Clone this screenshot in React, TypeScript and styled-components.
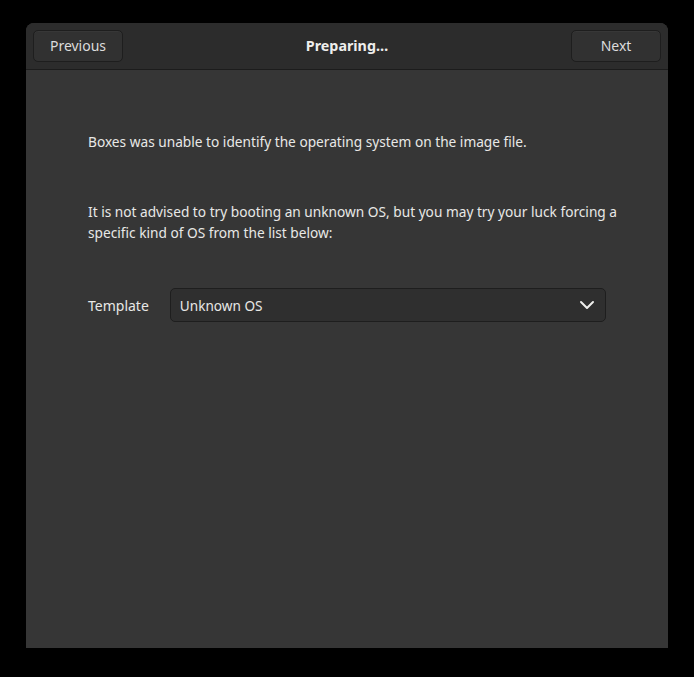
import React from "react";
import styled, { createGlobalStyle } from "styled-components";

const Global = createGlobalStyle`
  html, body { margin: 0; padding: 0; background: #000; }
  body { font-family: "Noto Sans", "DejaVu Sans", sans-serif; }
`;

const Page = styled.div`
  width: 694px;
  height: 677px;
  padding: 23px 26px 29px 26px;
  box-sizing: border-box;
  background: #000;
`;

const Window = styled.div`
  width: 642px;
  height: 625px;
  display: flex;
  flex-direction: column;
  border-radius: 8px 8px 0 0;
  overflow: hidden;
  background: #363636;
`;

const HeaderBar = styled.div`
  height: 47px;
  flex: 0 0 auto;
  display: flex;
  align-items: center;
  justify-content: space-between;
  padding: 0 7px 1px 7px;
  box-sizing: border-box;
  background: #2c2c2c;
  border-bottom: 1px solid #1c1c1c;
`;

const Button = styled.button`
  width: 90px;
  height: 32px;
  border-radius: 5px;
  border: 1px solid #1e1e1e;
  background: #313131;
  color: #dcdcdc;
  font-family: "Noto Sans", sans-serif;
  font-size: 14px;
  padding: 0 0 1px 0;
  box-shadow: inset 0 1px rgba(255,255,255,0.03);
`;

const Title = styled.div`
  color: #eeeeec;
  font-weight: 700;
  font-size: 14.3px;
  padding-bottom: 1px;
`;

const Body = styled.div`
  flex: 1;
  padding: 61px 62px 0 62px;
  display: flex;
  flex-direction: column;
  color: #e8e8e6;
  font-size: 13.7px;
  line-height: 21px;
`;

const Para = styled.p<{ $gap: number }>`
  margin: 0 -16px ${(p) => p.$gap}px 0;
`;

const Row = styled.div`
  display: flex;
  align-items: center;
  gap: 21px;
`;

const Label = styled.span`
  color: #e8e8e6;
  font-size: 14px;
`;

const Select = styled.div`
  flex: 1;
  height: 34px;
  box-sizing: border-box;
  border: 1px solid #1e1e1e;
  border-radius: 5px;
  background: #2f2f2f;
  display: flex;
  align-items: center;
  justify-content: space-between;
  padding: 0 10px 0 9px;
  color: #e8e8e6;
  font-size: 13.6px;
`;

export default function App() {
  return (
    <>
      <Global />
      <Page>
        <Window>
          <HeaderBar>
            <Button>Previous</Button>
            <Title>Preparing…</Title>
            <Button>Next</Button>
          </HeaderBar>
          <Body>
            <Para $gap={49}>Boxes was unable to identify the operating system on the image file.</Para>
            <Para $gap={45}>
              It is not advised to try booting an unknown OS, but you may try your luck forcing a specific kind of OS from the list below:
            </Para>
            <Row>
              <Label>Template</Label>
              <Select>
                <span>Unknown OS</span>
                <svg width="16" height="16" viewBox="0 0 16 16">
                  <path d="M2 5 L8 11 L14 5" fill="none" stroke="#eeeeec" strokeWidth="2" strokeLinecap="round" strokeLinejoin="round" />
                </svg>
              </Select>
            </Row>
          </Body>
        </Window>
      </Page>
    </>
  );
}
